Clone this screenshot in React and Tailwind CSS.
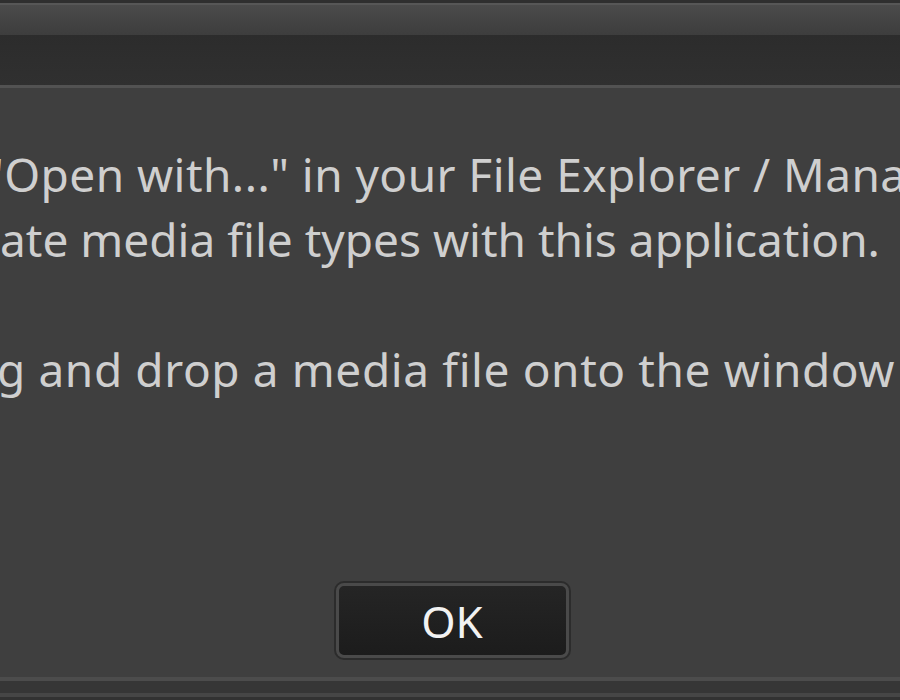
import React from 'react';

function Line({ hidden, children }) {
    return (
        <div className="flex h-[65px] items-center whitespace-nowrap">
            <span className="inline-flex w-0 justify-end">{hidden}</span>
            <span>{children}</span>
        </div>
    );
}

export default function App() {
    return (
        <div className="flex h-[700px] w-[900px] flex-col overflow-hidden bg-[#3f3f3f] font-['Noto_Sans',sans-serif]">
            {/* window chrome */}
            <div className="h-[3px] bg-[#2f2f2f]" />
            <div className="h-[32px] border-t-2 border-[#575757] bg-gradient-to-b from-[#4b4b4b] to-[#3d3d3d]" />
            <div className="h-[50px] bg-gradient-to-b from-[#2c2c2c] to-[#303030]" />
            <div className="h-[3px] bg-[#525252]" />

            {/* message body */}
            <div className="flex flex-1 flex-col overflow-hidden pt-[54px] text-[46px] text-[#cfcfcf]">
                <div className="-ml-[15px] tracking-[0.45px]">
                    <Line hidden="Use ">"Open with..." in your File Explorer / Manager to</Line>
                </div>
                <Line hidden="associ">ate media file types with this application.</Line>
                <div className="h-[65px]" />
                <div className="-ml-[3px] tracking-[0.6px]">
                    <Line hidden="Dra">g and drop a media file onto the window</Line>
                </div>

                <div className="mt-auto flex justify-center pb-[17px] pl-[4px]">
                    <button className="flex h-[79px] w-[237px] items-center justify-center rounded-[10px] border-2 border-[#2c2c2c] bg-[#2c2c2c] p-0">
                        <span className="flex h-full w-full items-center justify-center rounded-[8px] border-[3px] border-[#4a4a4a] bg-gradient-to-b from-[#252525] to-[#1c1c1c] text-[44px] text-[#f2f2f2]">
                            OK
                        </span>
                    </button>
                </div>
            </div>

            {/* status area */}
            <div className="h-[4px] bg-[#4c4c4c]" />
            <div className="h-[12px] bg-[#363636]" />
            <div className="h-[4px] bg-[#464646]" />
            <div className="h-[3px] bg-[#323232]" />
        </div>
    );
}
